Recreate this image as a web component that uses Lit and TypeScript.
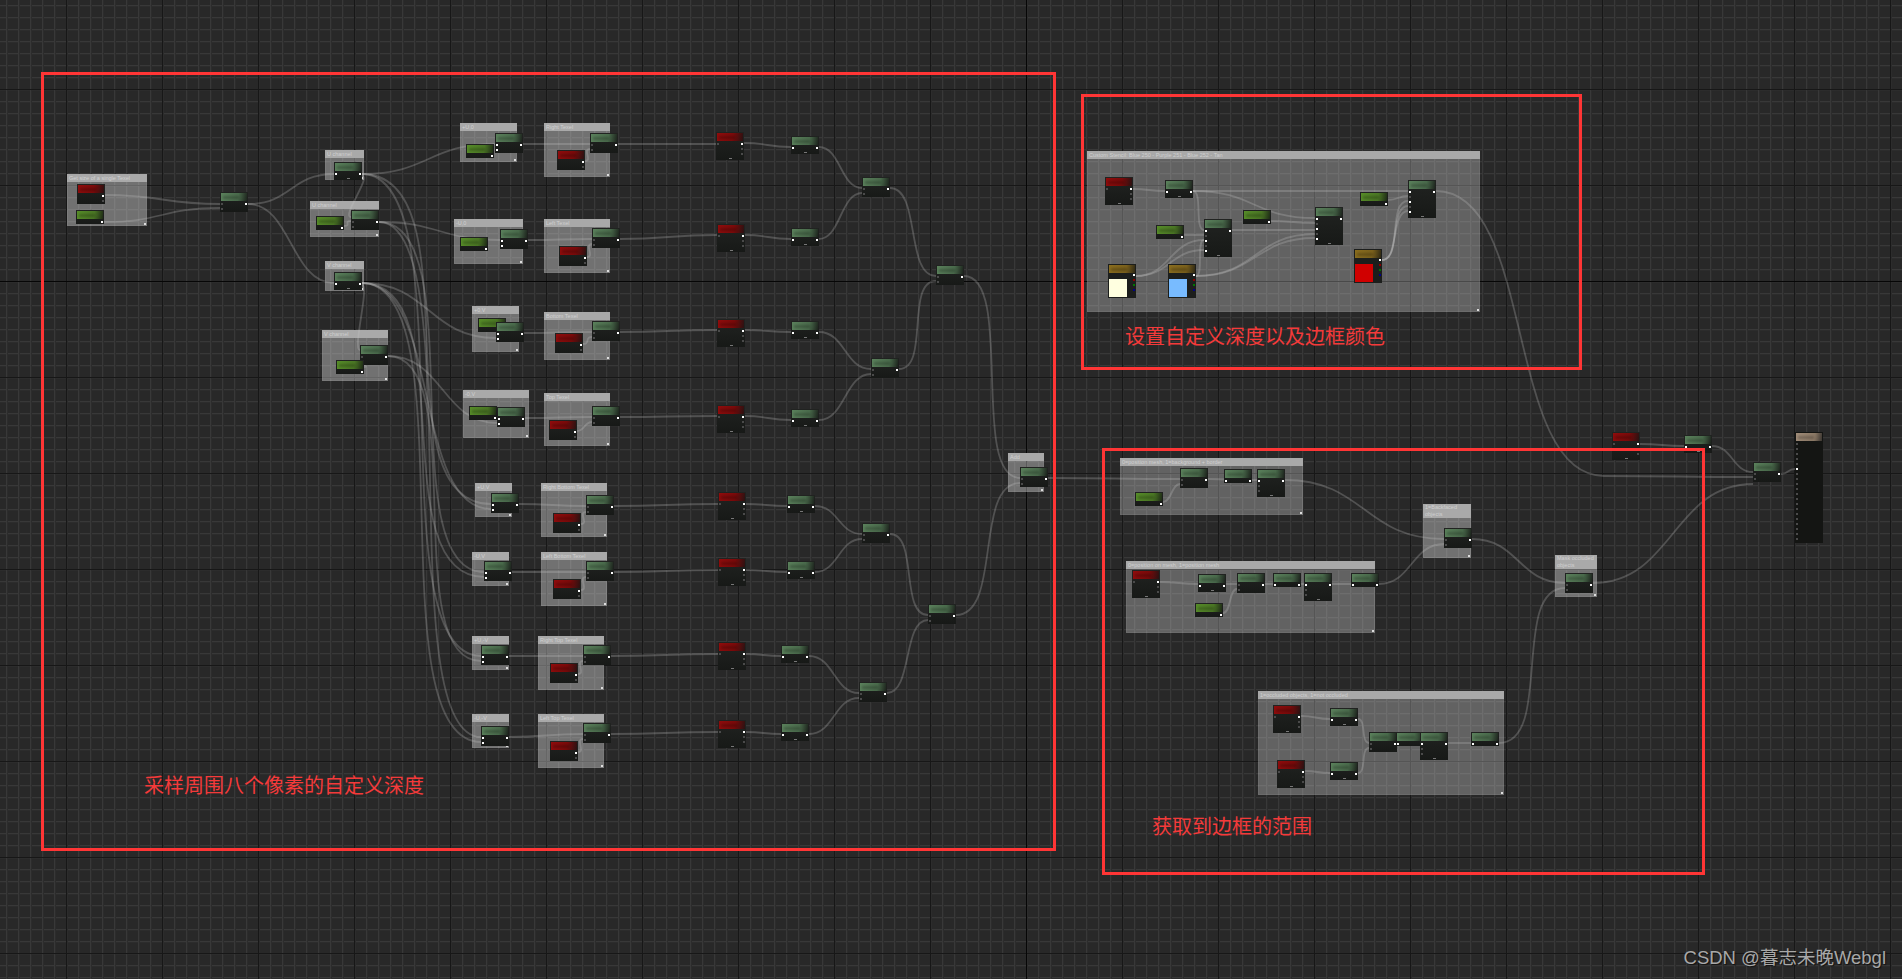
import { LitElement, html, css, svg } from 'lit';
import { customElement } from 'lit/decorators.js';

type Kind = keyof typeof KINDS;
type Wire = [number, number, number, number];

// pin rows: 1 = connected (white), 0 = unconnected (dim)
const KINDS = {
    konst: { h: 14, tone: 'bright', left: [], right: [1], foot: false },
    math: { h: 20, tone: 'green', left: [0, 0], right: [1], foot: false },
    one: { h: 18, tone: 'green', left: [1], right: [1], foot: true },
    mid: { h: 14, tone: 'green', left: [1], right: [1], foot: false },
    big: { h: 28, tone: 'green', left: [1, 0, 0], right: [1], foot: true },
    tall: { h: 38, tone: 'green', left: [1, 0, 1, 0, 1], right: [1], foot: true },
    pair: { h: 20, tone: 'green', left: [1, 1], right: [1], foot: false },
    tex: { h: 28, tone: 'red', left: [0], right: [1, 0, 0], foot: true },
    texs: { h: 20, tone: 'red', left: [], right: [1, 0], foot: false },
    final: { h: 111, tone: 'brown', left: [0, 0, 0, 0, 0, 1, 0, 0, 0, 0, 0, 0, 0, 0, 0, 0, 0, 0, 0, 0], right: [], foot: false },
};

const FRAMES = [
    { x: 41, y: 72, w: 1015, h: 779 },
    { x: 1081, y: 94, w: 501, h: 276 },
    { x: 1102, y: 448, w: 603, h: 427 },
];

const CAPTIONS = [
    { x: 144, y: 773, text: '采样周围八个像素的自定义深度' },
    { x: 1125, y: 324, text: '设置自定义深度以及边框颜色' },
    { x: 1152, y: 814, text: '获取到边框的范围' },
];

const BOXES = [
    { x: 67, y: 174, w: 80, h: 52, t: 'Get size of a single Texel' },
    { x: 325, y: 150, w: 39, h: 30, t: 'U channel' },
    { x: 310, y: 201, w: 69, h: 36, t: 'U channel' },
    { x: 325, y: 261, w: 39, h: 30, t: 'V channel' },
    { x: 322, y: 330, w: 66, h: 51, t: 'V channel' },
    { x: 460, y: 123, w: 57, h: 39, t: '+U,0' },
    { x: 454, y: 219, w: 69, h: 45, t: '-U,0' },
    { x: 472, y: 306, w: 47, h: 46, t: '+0,V' },
    { x: 463, y: 390, w: 66, h: 48, t: '-0,V' },
    { x: 544, y: 123, w: 66, h: 54, t: 'Right Texel' },
    { x: 544, y: 219, w: 66, h: 54, t: 'Left Texel' },
    { x: 544, y: 312, w: 66, h: 48, t: 'Bottom Texel' },
    { x: 544, y: 393, w: 66, h: 53, t: 'Top Texel' },
    { x: 475, y: 483, w: 37, h: 34, t: '+U,V' },
    { x: 541, y: 483, w: 66, h: 54, t: 'Right Bottom Texel' },
    { x: 472, y: 552, w: 37, h: 34, t: '-U,V' },
    { x: 541, y: 552, w: 66, h: 54, t: 'Left Bottom Texel' },
    { x: 472, y: 636, w: 37, h: 34, t: '+U,-V' },
    { x: 538, y: 636, w: 66, h: 54, t: 'Right Top Texel' },
    { x: 472, y: 714, w: 37, h: 34, t: '-U,-V' },
    { x: 538, y: 714, w: 66, h: 54, t: 'Left Top Texel' },
    { x: 1008, y: 453, w: 36, h: 39, t: 'Add' },
    { x: 1087, y: 151, w: 393, h: 161, t: 'Custom Stencil: Blue 250 - Purple 251 - Blue 252 - Tan', dark: true },
    { x: 1120, y: 458, w: 183, h: 57, t: '0=position mesh, 1=background + border', dark: true },
    { x: 1423, y: 504, w: 48, h: 54, t: '1=Backfaced objects', tall: true },
    { x: 1126, y: 561, w: 249, h: 72, t: '0=position on mesh, 1=position mesh', dark: true },
    { x: 1555, y: 555, w: 42, h: 42, t: 'Mask occluded objects', tall: true },
    { x: 1258, y: 691, w: 246, h: 104, t: '1=occluded objects, 1=not occluded', dark: true },
];

const NODES: [Kind, number, number][] = [
    ['texs', 77, 184], ['konst', 76, 210], ['math', 220, 192],
    ['one', 334, 162], ['konst', 316, 216], ['math', 351, 210],
    ['one', 334, 272], ['math', 360, 345], ['konst', 336, 360],
    ['konst', 466, 144], ['pair', 495, 133], ['konst', 460, 237], ['pair', 500, 229],
    ['konst', 478, 318], ['pair', 496, 322], ['konst', 469, 406], ['pair', 497, 407],
    ['texs', 557, 150], ['math', 590, 133], ['texs', 559, 246], ['math', 592, 228],
    ['texs', 555, 333], ['math', 592, 321], ['texs', 549, 420], ['math', 592, 406],
    ['pair', 491, 493], ['texs', 553, 513], ['math', 586, 495],
    ['pair', 484, 561], ['texs', 553, 579], ['math', 586, 561],
    ['pair', 481, 645], ['texs', 550, 663], ['math', 583, 645],
    ['pair', 481, 726], ['texs', 550, 741], ['math', 583, 723],
    ['tex', 716, 132], ['one', 791, 136], ['tex', 717, 224], ['one', 791, 228],
    ['tex', 717, 319], ['one', 791, 321], ['tex', 717, 405], ['one', 791, 409],
    ['tex', 718, 492], ['one', 787, 495], ['tex', 718, 558], ['one', 787, 561],
    ['tex', 718, 642], ['one', 781, 645], ['tex', 718, 720], ['one', 781, 723],
    ['math', 862, 177], ['math', 871, 358], ['math', 862, 523], ['math', 859, 682],
    ['math', 936, 265], ['math', 928, 604], ['math', 1020, 467],
    // stencil group
    ['tex', 1105, 177], ['one', 1165, 180], ['tall', 1204, 219], ['konst', 1156, 225],
    ['konst', 1243, 210], ['tall', 1315, 207], ['konst', 1360, 192], ['tall', 1408, 180],
    // border range group
    ['math', 1180, 468], ['konst', 1135, 492], ['mid', 1224, 469], ['big', 1257, 469],
    ['math', 1444, 528], ['tex', 1132, 570], ['one', 1198, 574], ['math', 1237, 573],
    ['mid', 1273, 573], ['big', 1304, 573], ['mid', 1351, 573], ['konst', 1195, 603],
    ['math', 1565, 573],
    ['tex', 1273, 705], ['one', 1330, 708], ['tex', 1277, 760], ['one', 1330, 762],
    ['math', 1369, 732], ['mid', 1396, 732], ['big', 1420, 732], ['mid', 1471, 732],
    // output
    ['tex', 1612, 432], ['one', 1684, 435], ['math', 1753, 462], ['final', 1795, 432],
];

const SWATCHES = [
    { x: 1108, y: 264, c: '#ffffe0' },
    { x: 1168, y: 264, c: '#78bbff' },
    { x: 1354, y: 249, c: '#d00000' },
];

const U1: [number, number] = [362, 174];
const U2: [number, number] = [379, 222];
const V1: [number, number] = [362, 283];
const V2: [number, number] = [388, 356];

const WIRES: Wire[] = [
    [105, 195, 220, 204], [104, 222, 220, 208], [248, 204, 334, 174], [248, 204, 334, 283],
    [...U1, 495, 144], [...U1, 491, 504], [...U1, 481, 656],
    [...U2, 500, 240], [...U2, 484, 572], [...U2, 481, 737],
    [...V1, 496, 338], [...V1, 491, 509], [...V1, 484, 577],
    [...V2, 497, 423], [...V2, 481, 661], [...V1, 481, 742],
    [362, 176, 351, 217], [362, 285, 360, 350],
    [344, 226, 351, 221], [364, 367, 360, 361],
    [523, 144, 590, 144], [528, 240, 592, 239], [524, 333, 592, 332], [525, 418, 592, 417],
    [618, 144, 716, 144], [620, 239, 717, 235], [620, 332, 717, 330], [620, 417, 717, 416],
    [744, 143, 791, 147], [745, 235, 791, 239], [745, 330, 791, 332], [745, 416, 791, 420],
    [819, 147, 862, 188], [819, 239, 862, 193], [819, 332, 871, 369], [819, 420, 871, 374],
    [890, 188, 936, 276], [899, 369, 936, 281], [964, 276, 1020, 478],
    [519, 504, 586, 506], [512, 572, 586, 572], [509, 656, 583, 656], [509, 737, 583, 734],
    [614, 506, 718, 504], [614, 572, 718, 570], [611, 656, 718, 654], [611, 734, 718, 732],
    [746, 504, 787, 506], [746, 570, 787, 572], [746, 654, 781, 656], [746, 732, 781, 734],
    [815, 506, 862, 534], [815, 572, 862, 539], [809, 656, 859, 693], [809, 734, 859, 698],
    [890, 534, 928, 615], [887, 693, 928, 620], [956, 615, 1020, 483],
    [1048, 478, 1180, 479], [1163, 502, 1180, 484], [1208, 479, 1257, 480],
    [1285, 480, 1444, 539], [1160, 582, 1198, 584], [1226, 584, 1237, 584], [1223, 613, 1237, 589],
    [1265, 584, 1351, 584], [1379, 584, 1444, 544], [1472, 539, 1565, 583], [1593, 583, 1753, 484],
    [1499, 743, 1565, 588], [1301, 716, 1330, 719], [1305, 771, 1330, 773],
    [1358, 719, 1369, 743], [1358, 773, 1369, 748], [1448, 743, 1471, 743],
    [1133, 189, 1165, 191], [1193, 191, 1408, 191], [1193, 191, 1315, 218], [1193, 191, 1204, 230],
    [1184, 235, 1204, 235], [1271, 221, 1315, 223], [1232, 230, 1315, 230],
    [1136, 276, 1204, 240], [1136, 276, 1204, 250], [1196, 276, 1204, 240], [1196, 276, 1315, 238], [1196, 276, 1315, 234],
    [1388, 200, 1408, 196], [1382, 260, 1408, 201], [1382, 260, 1408, 206], [1382, 260, 1408, 211],
    [1436, 191, 1604, 476], [1604, 476, 1753, 477],
    [1640, 444, 1684, 446], [1712, 446, 1753, 472], [1781, 474, 1795, 469],
    [581, 524, 586, 512], [581, 590, 586, 577], [578, 674, 583, 661], [578, 752, 583, 739],
    [585, 161, 590, 149], [587, 257, 592, 244], [583, 344, 592, 337], [577, 431, 592, 422],
];

// long vertical runs get stronger tangents, the way the graph editor draws them
const wirePath = ([x1, y1, x2, y2]: Wire) => {
    const dx = Math.abs(x2 - x1);
    const dy = Math.abs(y2 - y1);
    const bend = Math.max(dx / 2, Math.min(dy * 0.35, dx * 0.9), 8);
    return `M${x1} ${y1}C${x1 + bend} ${y1} ${x2 - bend} ${y2} ${x2} ${y2}`;
};

@customElement('app-root')
export class AppRoot extends LitElement {
    static styles = css`
    :host {
        display: block;
        position: relative;
        width: 1902px;
        height: 979px;
        overflow: hidden;
        font-family: "Liberation Sans", "Noto Sans CJK SC", sans-serif;
        background-color: #282828;
        background-image:
            linear-gradient(#060606, #060606),
            linear-gradient(#060606, #060606),
            linear-gradient(90deg, #171717 1px, transparent 1px),
            linear-gradient(#171717 1px, transparent 1px),
            linear-gradient(90deg, #383838 1px, #2c2c2c 1px, #2c2c2c 2px, transparent 2px),
            linear-gradient(#383838 1px, #2c2c2c 1px, #2c2c2c 2px, transparent 2px);
        background-size: 1px 100%, 100% 1px, 96px 96px, 96px 96px, 12px 12px, 12px 12px;
        background-position: 1026px 0, 0 281px, 66px 0, 0 89px, 6px 0, 0 5px;
        background-repeat: no-repeat, no-repeat, repeat, repeat, repeat, repeat;
    }

    .box {
        position: absolute;
        background: rgba(255, 255, 255, 0.34);
        box-shadow: inset 0 0 0 1px rgba(255, 255, 255, 0.06);
    }

    .box.dark {
        background: rgba(255, 255, 255, 0.27);
    }

    .box::after {
        content: '';
        position: absolute;
        right: 1px;
        bottom: 1px;
        width: 2px;
        height: 2px;
        background: #ddd;
    }

    .box-title {
        height: 8px;
        padding-left: 2px;
        background: #a9a9a9;
        color: #d0d0d0;
        font-size: 5.5px;
        line-height: 8px;
        white-space: nowrap;
    }

    .box.tall .box-title {
        height: 14px;
        white-space: normal;
        line-height: 7px;
    }

    .wires {
        position: absolute;
        inset: 0;
        width: 1902px;
        height: 979px;
        fill: none;
        stroke: rgba(205, 205, 205, 0.25);
        stroke-width: 1.8;
    }

    .node {
        position: absolute;
        width: 28px;
        box-sizing: border-box;
        background: linear-gradient(#212321, #171917);
        display: flex;
        flex-direction: column;
    }

    .head {
        position: relative;
        height: 8px;
        flex: none;
        margin: 1px 1px 0;
    }

    .head::after {
        content: '';
        position: absolute;
        left: 2px;
        top: 3px;
        width: 60%;
        height: 3px;
        background: rgba(0, 0, 0, 0.22);
        filter: blur(1px);
    }

    .green .head { background: linear-gradient(100deg, #5a805b, #496a4b 65%, #1d241d); }
    .bright .head { background: linear-gradient(100deg, #568c28, #4a7624 65%, #1e2a16); }
    .red .head { background: linear-gradient(100deg, #8f0c0c, #7a0a0a 60%, #2a1212); }
    .brown .head { background: linear-gradient(100deg, #a08c78, #8a7865 70%, #3a3530); }
    .yellow .head { background: linear-gradient(100deg, #8a6d1e, #7a601c 65%, #2e2814); }

    .final { background: #141513; }

    .pins {
        display: flex;
        justify-content: space-between;
        padding: 2px 1px 0;
        flex: 1;
    }

    .col {
        display: flex;
        flex-direction: column;
        gap: 3px;
    }

    .pin {
        width: 2px;
        height: 2px;
        background: #4a4a4a;
    }

    .pin.on {
        background: #fff;
    }

    .foot {
        position: absolute;
        left: 13px;
        bottom: 1px;
        width: 3px;
        height: 1px;
        background: #777;
    }

    .swatch-node {
        position: absolute;
        width: 28px;
        height: 34px;
        background: #1c1e1c;
    }

    .swatch-body {
        display: flex;
        align-items: flex-start;
        gap: 1px;
        padding: 6px 0 0 1px;
    }

    .swatch-color {
        width: 18px;
        height: 18px;
        flex: none;
    }

    .swatch-pins {
        display: flex;
        flex-direction: column;
        gap: 3px;
        margin: -5px 0 0 5px;
    }

    .frame {
        position: absolute;
        box-sizing: border-box;
        border: 3px solid #ff3535;
    }

    .caption {
        position: absolute;
        color: #f43a3a;
        font-size: 20px;
        line-height: 26px;
        white-space: nowrap;
    }

    .mark {
        position: absolute;
        right: 16px;
        bottom: 9px;
        color: #a8a8a8;
        font-size: 18.5px;
        line-height: 24px;
        text-shadow: 1px 1px 1px #111;
        white-space: nowrap;
    }`;

    renderNode ([kind, x, y]: [Kind, number, number]) {
        const def = KINDS[kind];
        const pins = (row: readonly number[]) => row.map((on) => html`<i class="pin ${on ? 'on' : ''}"></i>`);

        return html`<div class="node ${def.tone} ${kind}" style="left:${x}px;top:${y}px;height:${def.h}px">
            <div class="head"></div>
            <div class="pins"><div class="col">${pins(def.left)}</div><div class="col">${pins(def.right)}</div></div>
            ${def.foot ? html`<i class="foot"></i>` : ''}
        </div>`;
    }

    render () {
        return html`
            ${BOXES.map((b) => html`<div class="box ${b.dark ? 'dark' : ''} ${b.tall ? 'tall' : ''}" style="left:${b.x}px;top:${b.y}px;width:${b.w}px;height:${b.h}px"><div class="box-title">${b.t}</div></div>`)}
            <svg class="wires" viewBox="0 0 1902 979">${WIRES.map((w) => svg`<path d="${wirePath(w)}"></path>`)}</svg>
            ${NODES.map((n) => this.renderNode(n))}
            ${SWATCHES.map((s) => html`<div class="swatch-node yellow" style="left:${s.x}px;top:${s.y}px">
                <div class="head"></div>
                <div class="swatch-body">
                    <div class="swatch-color" style="background:${s.c}"></div>
                    <div class="swatch-pins"><i class="pin on"></i><i class="pin" style="background:#800"></i><i class="pin" style="background:#070"></i><i class="pin" style="background:#008"></i></div>
                </div>
            </div>`)}
            ${FRAMES.map((f) => html`<div class="frame" style="left:${f.x}px;top:${f.y}px;width:${f.w}px;height:${f.h}px"></div>`)}
            ${CAPTIONS.map((c) => html`<div class="caption" style="left:${c.x}px;top:${c.y}px">${c.text}</div>`)}
            <div class="mark">CSDN @暮志未晚Webgl</div>
        `;
    }
}
